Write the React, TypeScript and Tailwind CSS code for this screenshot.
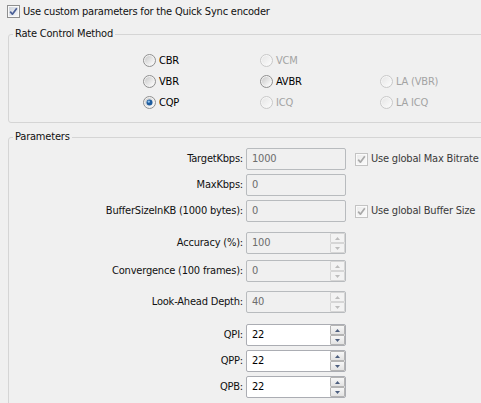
import React from "react";

function Radio({ checked = false, disabled = false }: { checked?: boolean; disabled?: boolean }) {
  const id = disabled ? "rgd" : "rge";
  return (
    <svg width="13" height="13" viewBox="0 0 13 13" className="shrink-0">
      <defs>
        <linearGradient id={id} x1="0" y1="0" x2="1" y2="1">
          <stop offset="0" stopColor={disabled ? "#e6e6e6" : "#c9c9c9"} />
          <stop offset="1" stopColor={disabled ? "#fbfbfb" : "#ffffff"} />
        </linearGradient>
      </defs>
      <circle cx="6.5" cy="6.5" r="6" fill={disabled ? "#f6f6f6" : "#f2f2f2"} stroke={disabled ? "#c8c8c8" : "#8f8f8f"} />
      <circle cx="6.5" cy="6.5" r="4.6" fill={`url(#${id})`} />
      {checked && (
        <>
          <circle cx="6.5" cy="6.5" r="3" fill="#1e5c9e" />
          <circle cx="5.8" cy="5.6" r="1.2" fill="#8fc2ee" />
        </>
      )}
    </svg>
  );
}

function Check({ disabled = false }: { disabled?: boolean }) {
  const id = disabled ? "cgd" : "cge";
  return (
    <svg width="13" height="13" viewBox="0 0 13 13" className="shrink-0">
      <defs>
        <linearGradient id={id} x1="0" y1="0" x2="1" y2="1">
          <stop offset="0" stopColor={disabled ? "#ececec" : "#cdd3dc"} />
          <stop offset="1" stopColor={disabled ? "#fafafa" : "#f7f8fa"} />
        </linearGradient>
      </defs>
      <rect x="0.5" y="0.5" width="12" height="12" fill="#fafafa" stroke={disabled ? "#c3c3c3" : "#8e8f8f"} />
      <rect x="2" y="2" width="9" height="9" fill={`url(#${id})`} />
      <path
        d="M3.2 6.6 L5.4 9.2 L9.8 3.2"
        fill="none"
        stroke={disabled ? "#a9a9a9" : "#4a5f97"}
        strokeWidth="1.7"
        strokeLinejoin="round"
      />
    </svg>
  );
}

function SpinBtn({ up, disabled }: { up: boolean; disabled: boolean }) {
  return (
    <div
      className={`flex h-[10px] w-[15px] items-center justify-center rounded-[1px] border ${
        disabled ? "border-[#d6d6d6] bg-[#f3f3f3]" : "border-[#b4b4b4] bg-gradient-to-b from-[#f7f7f7] to-[#e3e3e3]"
      }`}
    >
      <svg width="5" height="3" viewBox="0 0 5 3">
        <path d={up ? "M0 3 L2.5 0 L5 3 Z" : "M0 0 L5 0 L2.5 3 Z"} fill={disabled ? "#bdbdbd" : "#4c5e7e"} />
      </svg>
    </div>
  );
}

function Field({ value, disabled = false, spin = false }: { value: string; disabled?: boolean; spin?: boolean }) {
  return (
    <div
      className={`flex h-[22px] w-[100px] shrink-0 items-center rounded-[2px] border ${
        disabled ? "border-[#b8bbbe] bg-[#f0f0f0] text-[#6d6d6d]" : "border-[#abadb3] bg-white text-black"
      }`}
    >
      <span className="flex-1 pl-[5px] leading-[14px]">{value}</span>
      {spin && (
        <div className="flex flex-col self-stretch">
          <SpinBtn up disabled={disabled} />
          <SpinBtn up={false} disabled={disabled} />
        </div>
      )}
    </div>
  );
}

function Row({
  label,
  value,
  disabled = false,
  spin = false,
  check,
  mt,
}: {
  label: string;
  value: string;
  disabled?: boolean;
  spin?: boolean;
  check?: string;
  mt: string;
}) {
  return (
    <div className={`flex h-[22px] items-center ${mt}`}>
      <div className="w-[234px] shrink-0 text-right whitespace-nowrap">{label}</div>
      <div className="ml-[3px]">
        <Field value={value} disabled={disabled} spin={spin} />
      </div>
      {check && (
        <div className="ml-[9px] flex items-center gap-[3px] whitespace-nowrap text-[#3a3a3a]">
          <Check disabled />
          <span>{check}</span>
        </div>
      )}
    </div>
  );
}

function RadioItem({ label, checked = false, disabled = false }: { label: string; checked?: boolean; disabled?: boolean }) {
  return (
    <div className="flex h-[21px] items-center gap-[3px] whitespace-nowrap">
      <Radio checked={checked} disabled={disabled} />
      <span className={disabled ? "text-[#a3a3a3]" : "text-black"}>{label}</span>
    </div>
  );
}

export default function App() {
  return (
    <div className="h-[403px] w-[481px] overflow-hidden bg-[#f0f0f0] text-[11px] leading-[14px] tracking-[-0.2px] text-[#111] font-['Tahoma','DejaVu_Sans_Condensed','DejaVu_Sans',sans-serif]">
      <div className="flex h-[13px] items-center gap-[3px] pl-[7px] mt-[5px] whitespace-nowrap">
        <Check />
        <span>Use custom parameters for the Quick Sync encoder</span>
      </div>

      <fieldset className="ml-[8px] mt-[9px] w-[490px] rounded-[3px] border border-[#d5d5d5] pb-[9px]">
        <legend className="ml-[4px] px-[2px] leading-[14px]">Rate Control Method</legend>
        <div className="ml-[134px] mt-[9px] grid grid-cols-[117px_120px_auto]">
          <RadioItem label="CBR" />
          <RadioItem label="VCM" disabled />
          <div />
          <RadioItem label="VBR" />
          <RadioItem label="AVBR" />
          <RadioItem label="LA (VBR)" disabled />
          <RadioItem label="CQP" checked />
          <RadioItem label="ICQ" disabled />
          <RadioItem label="LA ICQ" disabled />
        </div>
      </fieldset>

      <fieldset className="ml-[8px] mt-[7px] h-[400px] w-[490px] rounded-[3px] border border-[#d5d5d5]">
        <legend className="ml-[4px] px-[2px] leading-[14px]">Parameters</legend>
        <Row mt="mt-[4px]" label="TargetKbps:" value="1000" disabled check="Use global Max Bitrate" />
        <Row mt="mt-[4px]" label="MaxKbps:" value="0" disabled />
        <Row mt="mt-[4px]" label="BufferSizeInKB (1000 bytes):" value="0" disabled check="Use global Buffer Size" />
        <Row mt="mt-[10px]" label="Accuracy (%):" value="100" disabled spin />
        <Row mt="mt-[6px]" label="Convergence (100 frames):" value="0" disabled spin />
        <Row mt="mt-[9px]" label="Look-Ahead Depth:" value="40" disabled spin />
        <Row mt="mt-[11px]" label="QPI:" value="22" spin />
        <Row mt="mt-[4px]" label="QPP:" value="22" spin />
        <Row mt="mt-[4px]" label="QPB:" value="22" spin />
      </fieldset>
    </div>
  );
}
